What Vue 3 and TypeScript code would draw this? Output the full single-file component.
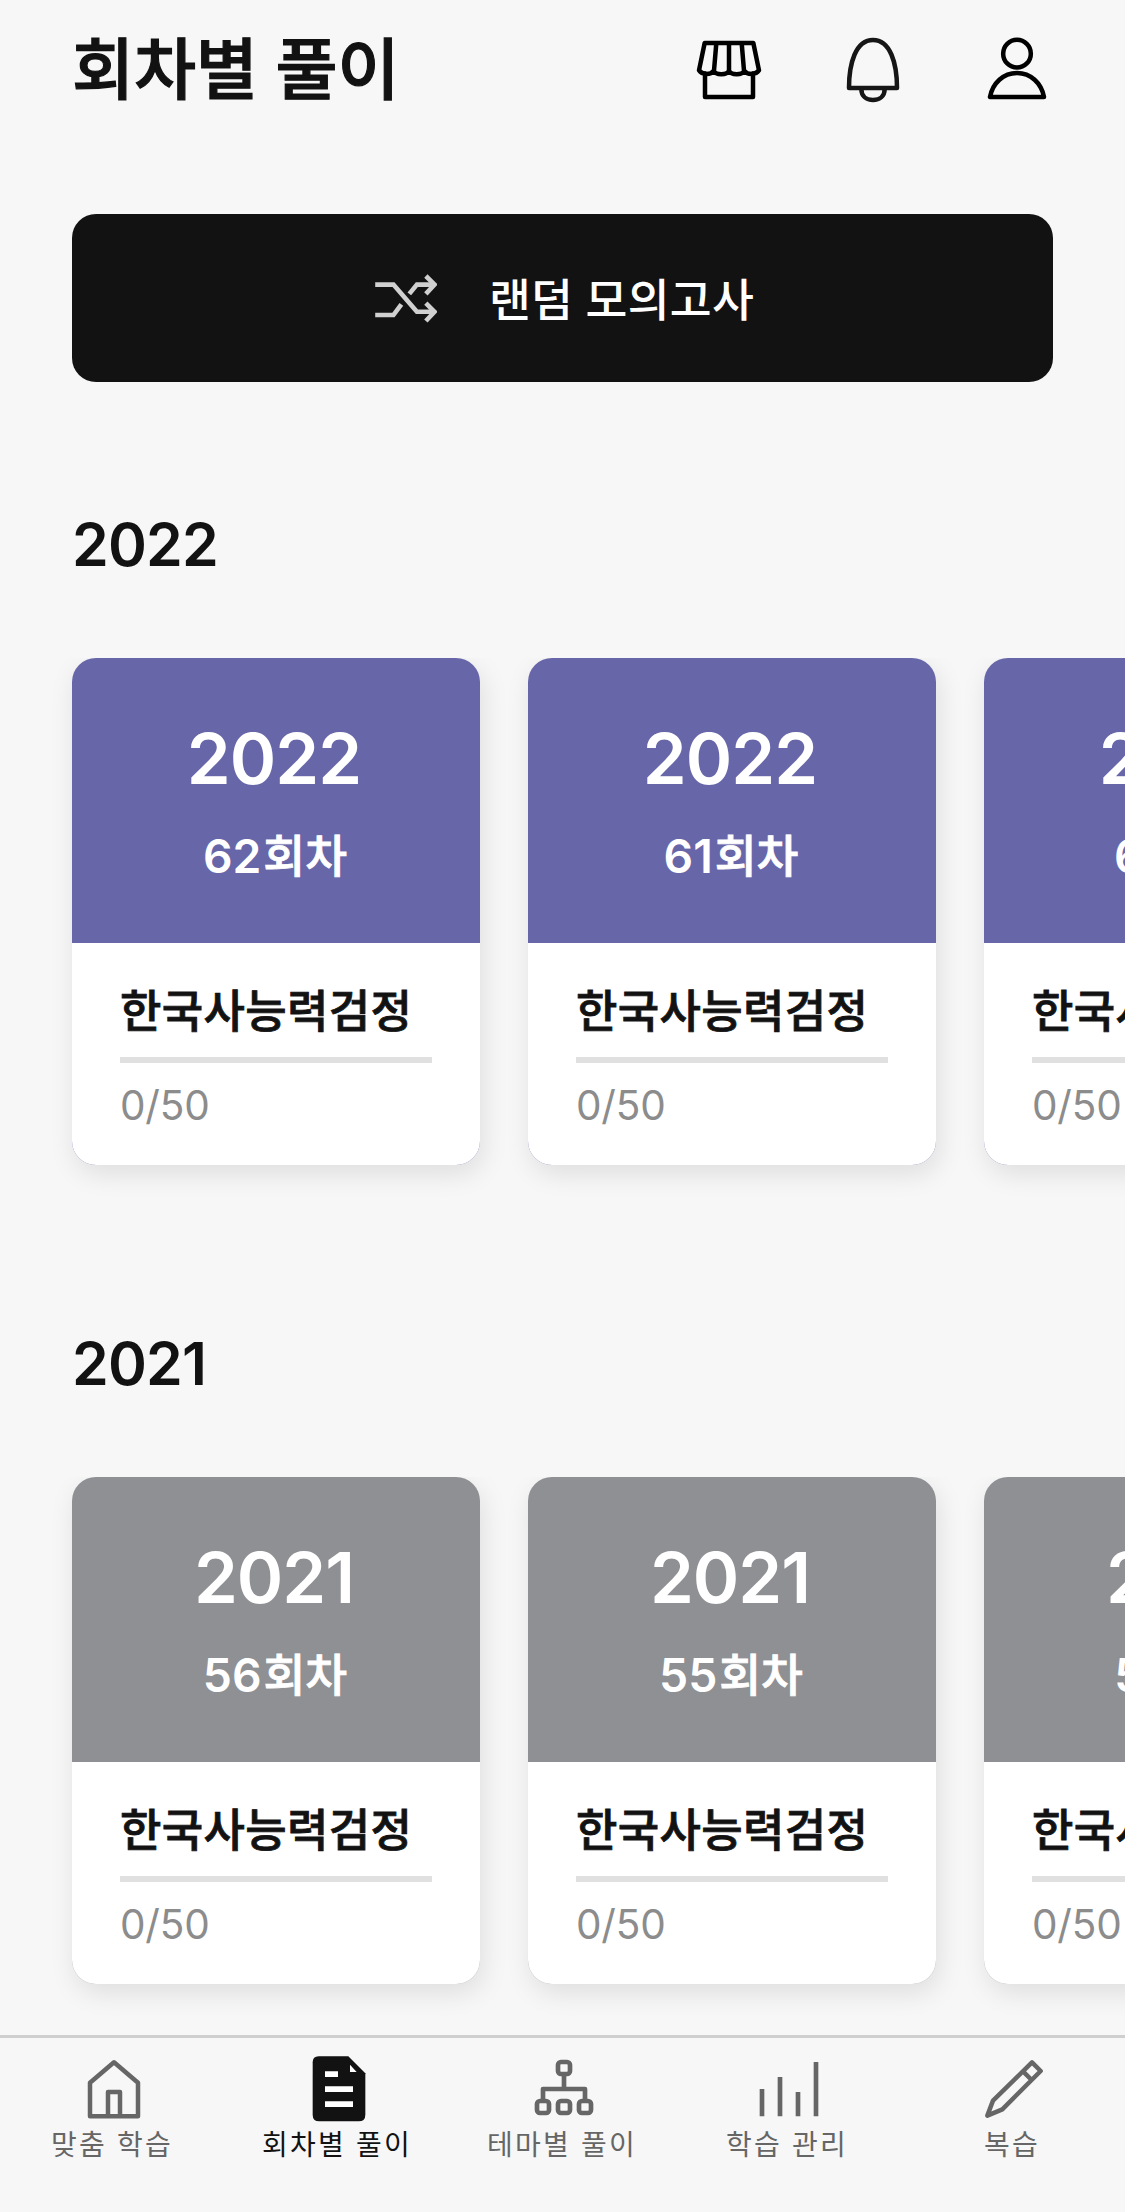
<script setup lang="ts">
interface Round {
  year: string
  number: number
  subject: string
  progress: string
}

interface YearSection {
  year: string
  tone: string
  rounds: Round[]
}

const makeSection = (year: string, tone: string, numbers: number[]): YearSection => ({
  year,
  tone,
  rounds: numbers.map((n) => ({
    year,
    number: n,
    subject: '한국사능력검정',
    progress: '0/50',
  })),
})

const sections: YearSection[] = [
  makeSection('2022', 'violet', [62, 61, 60]),
  makeSection('2021', 'gray', [56, 55, 54]),
]

const tabs = [
  { key: 'home', label: '맞춤 학습' },
  { key: 'doc', label: '회차별 풀이' },
  { key: 'tree', label: '테마별 풀이' },
  { key: 'bars', label: '학습 관리' },
  { key: 'pencil', label: '복습' },
]
const active = 'doc'
</script>

<template>
  <div class="screen">
    <header class="header">
      <h1 class="title">회차별 풀이</h1>
      <div class="actions">
        <svg viewBox="69 72 216 216" class="action">
          <path d="M104 99H250L267 181C258 195 232 195 223 182C216 196 184 196 177 182C170 196 138 196 131 182C122 195 96 195 87 181Z M139 99L132 182M177 99V182M215 99L222 182M105 190V261H249V190" />
        </svg>
        <svg viewBox="501 72 216 216" class="action soft">
          <path d="M537 234H681C681 160 661 90 609 90S537 160 537 234ZM574 237C574 258 589 270 609 270S644 258 644 237" />
        </svg>
        <svg viewBox="933 72 216 216" class="action">
          <circle cx="1041" cy="131" r="41.5" />
          <path d="M960 261H1122C1114 219 1082 189 1041 189S968 219 960 261Z" />
        </svg>
      </div>
    </header>

    <button class="random" type="button">
      <svg viewBox="105 216 186 148" class="shuffle">
        <path d="M105 248H160L231 330H283M105 340H160L184 308M208 276L231 248H283" />
        <path d="M258 222L284 248L258 276M258 304L284 330L258 358" />
      </svg>
      <span class="random-label">랜덤 모의고사</span>
    </button>

    <section v-for="section in sections" :key="section.year" class="section">
      <h2 class="year">{{ section.year }}</h2>
      <div class="row">
        <article v-for="item in section.rounds" :key="item.number" class="card" :class="section.tone">
          <div class="cover">
            <div class="cover-year">{{ item.year }}</div>
            <div class="cover-round">{{ item.number }}<span class="unit">회차</span></div>
          </div>
          <div class="body">
            <div class="subject">{{ item.subject }}</div>
            <div class="track"></div>
            <div class="progress">{{ item.progress }}</div>
          </div>
        </article>
      </div>
    </section>

    <nav class="tabs">
      <a v-for="tab in tabs" :key="tab.key" class="tab" :class="{ active: tab.key === active }">
        <svg v-if="tab.key === 'home'" viewBox="234 99 216 216" class="tab-icon">
          <path d="M342 127L414 188V289H270V188ZM324 289V216H360V289" />
        </svg>
        <svg v-else-if="tab.key === 'doc'" viewBox="909 99 216 216" class="tab-icon">
          <path class="fill" d="M956 109H1045L1096 160V284Q1096 304 1076 304H958Q938 304 938 284V127Q938 109 956 109Z" />
          <path class="paper" d="M1050 134V156H1070ZM975 154H1014V171H975ZM975 199H1059V216H975ZM975 244H1059V261H975Z" />
        </svg>
        <svg v-else-if="tab.key === 'tree'" viewBox="294 99 216 216" class="tab-icon tree">
          <rect x="384" y="126" width="36" height="36" rx="9" />
          <rect x="321" y="243" width="36" height="36" rx="9" />
          <rect x="384" y="243" width="36" height="36" rx="9" />
          <rect x="447" y="243" width="36" height="36" rx="9" />
          <path d="M402 164V206M339 240V207H465V240" />
        </svg>
        <svg v-else-if="tab.key === 'bars'" viewBox="969 99 216 216" class="tab-icon">
          <path class="fill" d="M989 207H1003V289H989ZM1043 171H1057V289H1043ZM1097 216H1111V289H1097ZM1151 126H1165V289H1151Z" />
        </svg>
        <svg v-else viewBox="834 99 216 216" class="tab-icon">
          <path d="M996 127L1022 153L907 268L862 287L879 242ZM969 154L995 180" />
        </svg>
        <span class="label">{{ tab.label }}</span>
      </a>
    </nav>
  </div>
</template>

<style>
html,
body {
  background: #f7f7f7;
}
</style>

<style scoped>
.screen {
  display: flex;
  flex-direction: column;
  width: 1125px;
  height: 2212px;
  overflow: hidden;
  background: #f7f7f7;
  color: #121212;
  font-family: Inter, 'Noto Sans CJK KR', sans-serif;
}

.header {
  display: flex;
  flex: none;
  align-items: flex-start;
  justify-content: space-between;
  height: 180px;
  padding: 34px 72px 0;
}

.title {
  margin: 0;
  font-size: 67.5px;
  font-weight: 500;
  line-height: 71px;
  letter-spacing: -0.2px;
  white-space: nowrap;
  -webkit-text-stroke: 1.2px #121212;
}

.actions {
  display: flex;
  gap: 72px;
}

.action {
  width: 72px;
  height: 72px;
  fill: none;
  stroke: #000;
  stroke-width: 13.5;
  stroke-linejoin: round;
  stroke-linecap: round;
}

.action.soft {
  stroke: #161616;
}

.random {
  display: flex;
  flex: none;
  align-items: center;
  gap: 52px;
  height: 168px;
  margin: 0 72px;
  padding: 0 0 0 303px;
  border: 0;
  border-radius: 24px;
  background: #121212;
  color: #fff;
  font: 500 45.5px/60px Inter, 'Noto Sans CJK KR', sans-serif;
  letter-spacing: 0.25px;
  white-space: nowrap;
}

.random-label {
  padding-top: 5px;
}

.shuffle {
  width: 62px;
  height: 49px;
  fill: none;
  stroke: #d0d0d0;
  stroke-width: 14;
}

.section {
  flex: none;
  height: 819px;
}

.year {
  margin: 0;
  padding: 127px 72px 0;
  height: 149px;
  font-size: 59px;
  font-weight: 600;
  line-height: 71px;
  letter-spacing: -0.8px;
}

.row {
  display: flex;
  gap: 48px;
  height: 560px;
  padding: 0 72px;
  overflow: hidden;
}

.card {
  flex: none;
  width: 408px;
  height: 507px;
  border-radius: 24px;
  overflow: hidden;
  box-shadow: 3px 9px 27px rgba(0, 0, 0, 0.1);
}

.violet {
  background: #6766a9;
}

.gray {
  background: #8f9094;
}

.cover {
  height: 285px;
  padding-top: 59px;
  box-sizing: border-box;
  color: #fff;
  font-weight: 600;
  text-align: center;
}

.cover-year {
  padding-right: 4px;
  font-size: 70.5px;
  line-height: 84px;
  letter-spacing: -1px;
}

.cover-round {
  margin-top: 12px;
  padding-right: 2px;
  font-size: 46.3px;
  line-height: 87px;
}

.unit {
  margin-left: 2px;
  font-size: 45.5px;
  font-weight: 500;
  -webkit-text-stroke: 0.8px #fff;
}

.body {
  height: 222px;
  padding: 39px 48px 0;
  box-sizing: border-box;
  background: #fff;
}

.subject {
  font-size: 45px;
  font-weight: 500;
  line-height: 60px;
  letter-spacing: 0.35px;
  white-space: nowrap;
  -webkit-text-stroke: 0.8px #121212;
}

.track {
  height: 6px;
  margin-top: 15px;
  background: #e0e0e0;
}

.progress {
  margin-top: 19px;
  color: #8c8c8c;
  font-size: 40.5px;
  line-height: 48px;
  letter-spacing: -0.2px;
}

.tabs {
  display: flex;
  flex: none;
  height: 177px;
  box-sizing: border-box;
  margin-top: 15px;
  border-top: 3px solid #cfcfcf;
}

.tab {
  display: flex;
  flex: 1 0 0;
  flex-direction: column;
  align-items: center;
  padding-top: 15px;
  color: #666;
}

.tab.active {
  color: #121212;
}

.tab-icon {
  width: 72px;
  height: 72px;
  margin-left: 3px;
  fill: none;
  stroke: currentColor;
  stroke-width: 13.5;
  stroke-linejoin: round;
  stroke-linecap: round;
}

.tree {
  stroke-width: 14;
  stroke-linecap: butt;
}

.fill {
  fill: currentColor;
  stroke: none;
}

.paper {
  fill: #fff;
  stroke: none;
}

.label {
  margin-top: 1px;
  padding-right: 1px;
  font-size: 28px;
  line-height: 38px;
  letter-spacing: 2.2px;
  white-space: nowrap;
}
</style>
